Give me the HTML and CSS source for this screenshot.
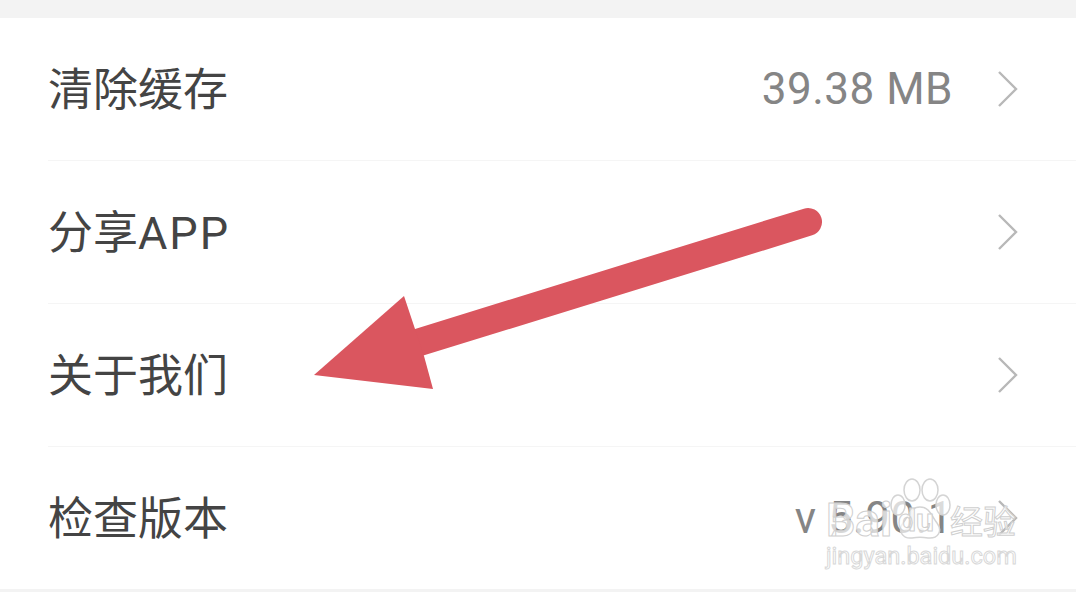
FILE: index.html
```html
<!DOCTYPE html>
<html lang="zh-CN">
<head>
  <meta charset="UTF-8">
  <meta name="viewport" content="width=device-width, initial-scale=1.0">
  <title>设置</title>
  <link rel="stylesheet" href="styles.css">
</head>
<body>

<div class="band-top"></div>

<div class="list">
  <div class="row">
    <span class="label">清除缓存</span>
    <span class="value">39.38 MB</span>
    <svg class="chevron" viewBox="0 0 22 38"><path d="M2 2 L19 19 L2 36"/></svg>
  </div>
  <div class="row">
    <span class="label">分享<span class="latin">APP</span></span>
    <svg class="chevron" viewBox="0 0 22 38"><path d="M2 2 L19 19 L2 36"/></svg>
  </div>
  <div class="row">
    <span class="label">关于我们</span>
    <svg class="chevron" viewBox="0 0 22 38"><path d="M2 2 L19 19 L2 36"/></svg>
  </div>
  <div class="row row-last">
    <span class="label">检查版本</span>
    <span class="value">v 5.90.1</span>
    <svg class="chevron" viewBox="0 0 22 38"><path d="M2 2 L19 19 L2 36"/></svg>
  </div>
</div>

<div class="band-bottom"></div>

<!-- red arrow drawn on top of the screenshot -->
<svg class="arrow" viewBox="0 0 1076 592">
  <path class="arrow-shaft" d="M808 222 L420 342"/>
  <polygon class="arrow-head" points="404,296 314,375 433,389 424,356 415,329"/>
</svg>

<!-- baidu watermark -->
<div class="watermark">
  <svg class="paw" viewBox="0 0 64 64">
    <ellipse cx="24" cy="13" rx="8" ry="11"/>
    <ellipse cx="42" cy="13" rx="8" ry="11"/>
    <ellipse cx="10" cy="28" rx="7" ry="10"/>
    <ellipse cx="55" cy="28" rx="7" ry="10"/>
    <path d="M32 30 C22 30 20 40 15 46 C9 54 15 62 24 61 C29 60 35 60 40 61 C50 62 55 54 49 46 C44 40 42 30 32 30 Z"/>
  </svg>
  <div class="wm-brand">
    <span class="wm-bai">Bai</span><span class="wm-du">du</span><span class="wm-jy">经验</span>
  </div>
  <div class="wm-url">jingyan.baidu.com</div>
</div>

</body>
</html>
```

FILE: styles.css
```css
html, body {
  margin: 0;
  padding: 0;
}
body {
  width: 1076px;
  height: 592px;
  overflow: hidden;
  position: relative;
  background: #fff;
  font-family: Roboto, "Noto Sans CJK SC", sans-serif;
}
.band-top {
  height: 18px;
  background: #f3f3f3;
}
.band-bottom {
  height: 3px;
  background: #f3f3f3;
}
.list {
  padding-left: 48px;
}
.row {
  height: 142px;
  display: flex;
  align-items: center;
  padding-right: 57px;
  border-bottom: 1px solid #f5f5f5;
}
.row-last {
  border-bottom: 0;
}
.label {
  flex: 1;
  font-size: 45px;
  color: #444;
  position: relative;
  top: -3px;
}
.latin {
  letter-spacing: 2px;
}
.value {
  font-size: 44px;
  color: #858585;
  margin-right: 44px;
  letter-spacing: 0.5px;
}
.chevron {
  width: 22px;
  height: 38px;
  fill: none;
  stroke: #b8b8b8;
  stroke-width: 2.4;
}
.arrow {
  position: absolute;
  left: 0;
  top: 0;
  width: 1076px;
  height: 592px;
}
.arrow-shaft {
  stroke: #da565f;
  stroke-width: 28;
  stroke-linecap: round;
  fill: none;
}
.arrow-head {
  fill: #da565f;
}
.watermark {
  position: absolute;
  left: 826px;
  top: 477px;
  width: 194px;
  height: 92px;
}
.paw {
  position: absolute;
  left: 62px;
  top: 0;
  width: 64px;
  height: 64px;
  fill: rgba(255, 255, 255, 0.7);
  stroke: #d4d4d4;
  stroke-width: 1.5;
}
.wm-brand {
  position: absolute;
  left: 0;
  top: 20px;
  height: 46px;
  width: 194px;
  display: flex;
  align-items: center;
  font-weight: 700;
  color: rgba(255, 255, 255, 0.7);
  -webkit-text-stroke: 1px #cfcfcf;
}
.wm-bai {
  font-size: 46px;
  width: 72px;
}
.wm-du {
  font-size: 32px;
  width: 52px;
}
.wm-jy {
  font-size: 33px;
  font-weight: 400;
}
.wm-url {
  position: absolute;
  left: 0;
  top: 64px;
  font-size: 23.5px;
  line-height: 30px;
  color: rgba(255, 255, 255, 0.7);
  -webkit-text-stroke: 1px #d8d8d8;
  white-space: nowrap;
}
```
